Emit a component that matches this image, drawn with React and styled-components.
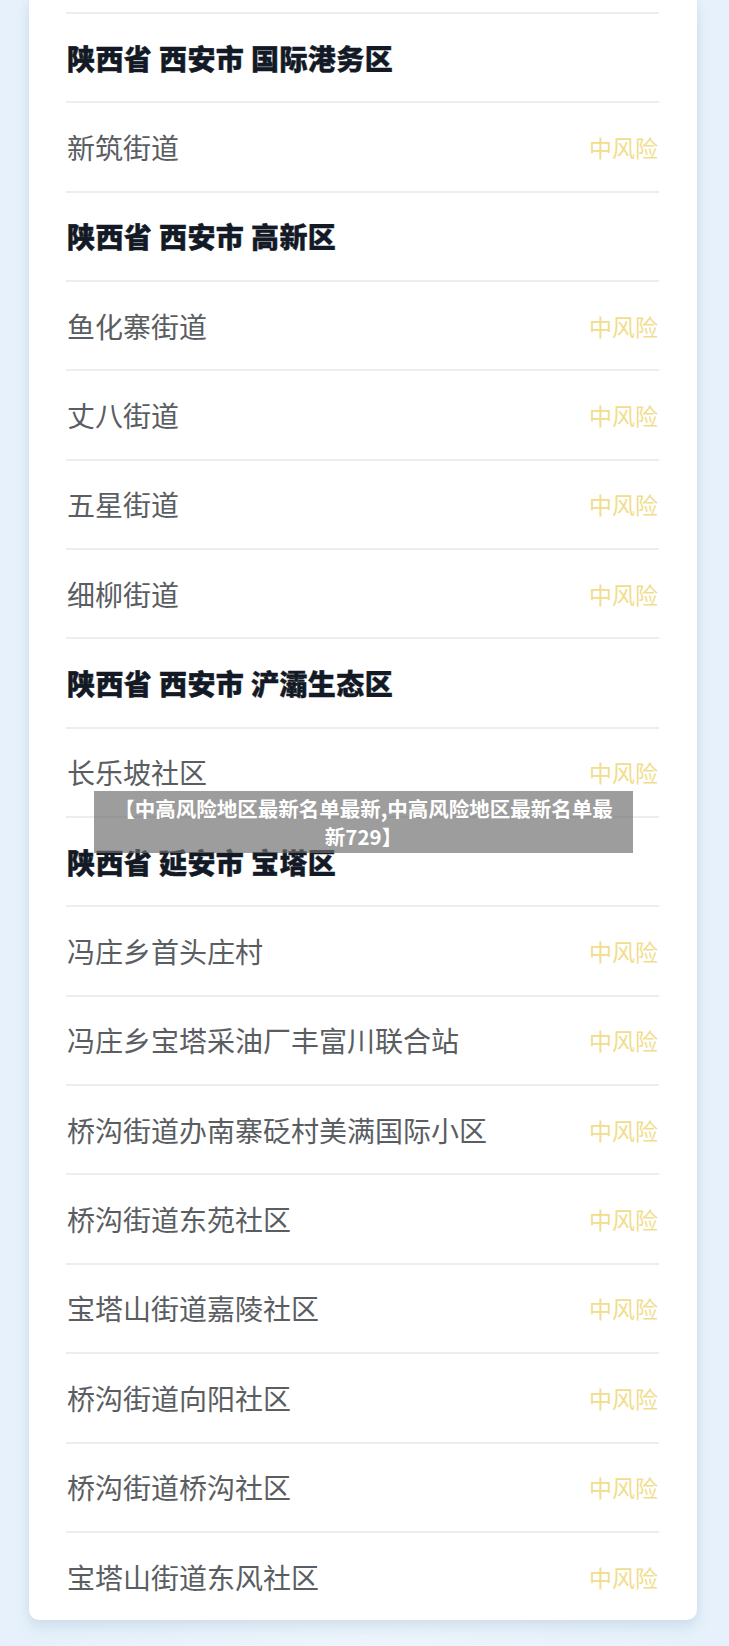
import React from 'react';
import styled, { createGlobalStyle } from 'styled-components';

const GlobalStyle = createGlobalStyle`
  html, body {
    margin: 0;
    padding: 0;
    background: #e9f2fa;
  }
  body {
    font-family: 'Noto Sans CJK SC', 'Noto Sans', sans-serif;
  }
`;

const Page = styled.div`
  position: relative;
  width: 729px;
  height: 1646px;
  overflow: hidden;
  background: linear-gradient(90deg, #e6f1fb 0%, #edf5fb 50%, #e6f1fb 100%);
`;

const Card = styled.div`
  margin: 0 32px 0 29px;
  padding: 12px 38px 0 37px;
  background: #ffffff;
  border-radius: 0 0 10px 10px;
  box-shadow: 0 8px 14px rgba(170, 195, 215, 0.35), 0 0 6px rgba(190, 210, 225, 0.3);
`;

const Item = styled.div`
  display: flex;
  align-items: center;
  justify-content: space-between;
  height: 89.35px;
  box-sizing: border-box;
  border-top: 2px solid #ededee;
  padding: 0 1px 0 1px;
`;

const Heading = styled.div`
  font-size: 28px;
  font-weight: 900;
  color: #131a26;
  letter-spacing: 0.4px;
  white-space: pre;
  -webkit-text-stroke: 0.4px #131a26;
`;

const Place = styled.div`
  font-size: 28px;
  font-weight: 400;
  color: #5a5d61;
`;

const Risk = styled.div`
  font-size: 23px;
  color: #f1dd8c;
`;

const Banner = styled.div`
  position: absolute;
  left: 94px;
  top: 791px;
  width: 539px;
  box-sizing: border-box;
  padding: 3px 19px 3px;
  background: rgba(110, 110, 110, 0.68);
  color: #ffffff;
  font-size: 20.5px;
  font-weight: 700;
  line-height: 28px;
  text-align: center;
`;

const groups = [
  { title: '陕西省 西安市 国际港务区', places: ['新筑街道'] },
  { title: '陕西省 西安市 高新区', places: ['鱼化寨街道', '丈八街道', '五星街道', '细柳街道'] },
  { title: '陕西省 西安市 浐灞生态区', places: ['长乐坡社区'] },
  {
    title: '陕西省 延安市 宝塔区',
    places: [
      '冯庄乡首头庄村',
      '冯庄乡宝塔采油厂丰富川联合站',
      '桥沟街道办南寨砭村美满国际小区',
      '桥沟街道东苑社区',
      '宝塔山街道嘉陵社区',
      '桥沟街道向阳社区',
      '桥沟街道桥沟社区',
      '宝塔山街道东风社区',
    ],
  },
];

export default function App() {
  return (
    <Page>
      <GlobalStyle />
      <Card>
        {groups.map((g) => (
          <React.Fragment key={g.title}>
            <Item>
              <Heading>{g.title}</Heading>
            </Item>
            {g.places.map((p) => (
              <Item key={p}>
                <Place>{p}</Place>
                <Risk>中风险</Risk>
              </Item>
            ))}
          </React.Fragment>
        ))}
      </Card>
      <Banner>【中高风险地区最新名单最新,中高风险地区最新名单最新729】</Banner>
    </Page>
  );
}
